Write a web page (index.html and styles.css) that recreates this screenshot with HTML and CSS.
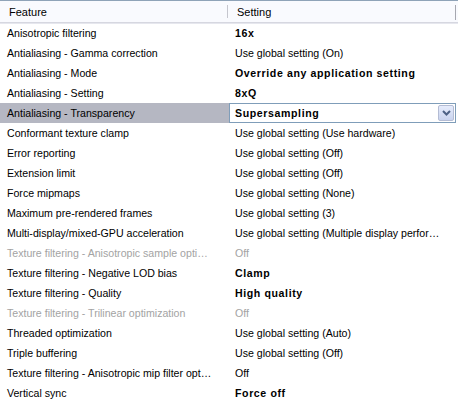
FILE: index.html
```html
<!DOCTYPE html>
<html>
<head>
<meta charset="utf-8">
<link rel="stylesheet" href="styles.css">
</head>
<body>
<div class="list">
  <div class="head">
    <div class="hcell c1">Feature</div>
    <div class="hcell c2"><span class="sep"></span>Setting</div>
    <div class="hend"></div>
  </div>
  <div class="row"><div class="c1">Anisotropic filtering</div><div class="c2 b">16x</div></div>
  <div class="row"><div class="c1">Antialiasing - Gamma correction</div><div class="c2">Use global setting (On)</div></div>
  <div class="row"><div class="c1">Antialiasing - Mode</div><div class="c2 b">Override any application setting</div></div>
  <div class="row"><div class="c1">Antialiasing - Setting</div><div class="c2 b">8xQ</div></div>
  <div class="row sel">
    <div class="c1">Antialiasing - Transparency</div>
    <div class="combo">
      <div class="ctext">Supersampling</div>
      <div class="cbtn"><svg width="9" height="6" viewBox="0 0 9 6"><path d="M1 1 L4.5 4.5 L8 1" fill="none" stroke="#4d6185" stroke-width="2"/></svg></div>
    </div>
  </div>
  <div class="row"><div class="c1">Conformant texture clamp</div><div class="c2">Use global setting (Use hardware)</div></div>
  <div class="row"><div class="c1">Error reporting</div><div class="c2">Use global setting (Off)</div></div>
  <div class="row"><div class="c1">Extension limit</div><div class="c2">Use global setting (Off)</div></div>
  <div class="row"><div class="c1">Force mipmaps</div><div class="c2">Use global setting (None)</div></div>
  <div class="row"><div class="c1">Maximum pre-rendered frames</div><div class="c2">Use global setting (3)</div></div>
  <div class="row"><div class="c1">Multi-display/mixed-GPU acceleration</div><div class="c2">Use global setting (Multiple display perfor…</div></div>
  <div class="row dis"><div class="c1">Texture filtering - Anisotropic sample opti…</div><div class="c2">Off</div></div>
  <div class="row"><div class="c1">Texture filtering - Negative LOD bias</div><div class="c2 b">Clamp</div></div>
  <div class="row"><div class="c1">Texture filtering - Quality</div><div class="c2 b">High quality</div></div>
  <div class="row dis"><div class="c1">Texture filtering - Trilinear optimization</div><div class="c2">Off</div></div>
  <div class="row"><div class="c1">Threaded optimization</div><div class="c2">Use global setting (Auto)</div></div>
  <div class="row"><div class="c1">Triple buffering</div><div class="c2">Use global setting (Off)</div></div>
  <div class="row"><div class="c1">Texture filtering - Anisotropic mip filter opt…</div><div class="c2">Off</div></div>
  <div class="row"><div class="c1">Vertical sync</div><div class="c2 b">Force off</div></div>
</div>
</body>
</html>
```
FILE: styles.css
```css
html, body {
  margin: 0;
  padding: 0;
  background: #ffffff;
}
body {
  font-family: "Liberation Sans", Arial, sans-serif;
  font-size: 10.6px;
  color: #000;
}
.list {
  width: 458px;
  height: 409px;
  border-top: 1px solid #8fa3b8;
  box-sizing: border-box;
  overflow: hidden;
}
.head {
  display: flex;
  height: 21px;
  background: #f9fafe;
  border-bottom: 1px solid #d6d7e0;
  box-shadow: 0 1px 0 #e6e7ee;
  align-items: center;
  font-size: 11px;
}
.hcell {
  box-sizing: border-box;
  height: 100%;
  display: flex;
  align-items: center;
}
.head .c1 {
  width: 227px;
  padding-left: 9px;
}
.head .c2 {
  width: 228px;
  padding-left: 0;
}
.sep {
  width: 1px;
  height: 13px;
  background: #c5c6ce;
  margin-right: 9px;
}
.hend {
  width: 1px;
  height: 15px;
  background: #a6a7b0;
  margin-top: 2px;
}
.row {
  display: flex;
  height: 20px;
  align-items: center;
}
.row .c1 {
  width: 229px;
  box-sizing: border-box;
  padding-left: 7px;
  white-space: nowrap;
  overflow: hidden;
}
.row .c2 {
  padding-left: 6px;
  white-space: nowrap;
}
.b {
  font-weight: bold;
  letter-spacing: 0.6px;
}
.dis {
  color: #a3a3a3;
}
.sel {
  background: linear-gradient(to right, #b5b7c2 229px, transparent 229px);
}
.sel .c1 {
  height: 100%;
  display: flex;
  align-items: center;
}
.combo {
  flex: 1;
  height: 20px;
  box-sizing: border-box;
  border: 1px solid #7f9db9;
  background: #fff;
  display: flex;
  align-items: center;
  margin-right: 2px;
}
.ctext {
  flex: 1;
  padding-left: 5px;
  font-weight: bold;
  letter-spacing: 0.6px;
}
.cbtn {
  width: 16px;
  height: 16px;
  margin-right: 1px;
  box-sizing: border-box;
  border: 1px solid #b4bcd4;
  border-radius: 2px;
  background: linear-gradient(#e6ecfc, #c9d3ee);
  display: flex;
  align-items: center;
  justify-content: center;
}
```
